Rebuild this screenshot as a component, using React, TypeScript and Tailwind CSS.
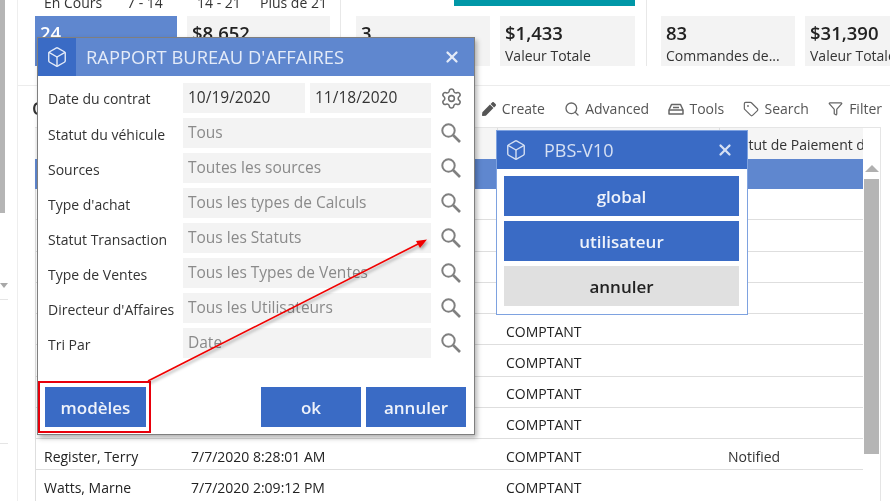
import { Box, Funnel, Search, Settings, Tag, X } from "lucide-react";
import { FaPen } from "react-icons/fa";

const font = { fontFamily: '"Open Sans", "Noto Sans", sans-serif' };

function Tile({ value, label, active, w }: { value: string; label: string; active?: boolean; w: string }) {
  return (
    <div className={`${w} h-[50px] shrink-0 pl-[5px] pt-[6px] ${active ? "bg-[#5f87cf] text-white" : "bg-[#f3f3f3] text-[#222]"}`}>
      <div className="text-[18.5px] leading-[21px] font-semibold">{value}</div>
      <div className="text-[14px] leading-[20px] mt-[3px] truncate text-[#333]">{label}</div>
    </div>
  );
}

function Tool({ icon, label, gap }: { icon: React.ReactNode; label: string; gap: string }) {
  return (
    <div className={`flex items-center ${gap} text-[14px] text-[#555]`}>
      {icon}
      <span>{label}</span>
    </div>
  );
}

function ToolboxIcon() {
  return (
    <svg width="16" height="16" viewBox="0 0 16 16" fill="none" stroke="#666" strokeWidth="1.5">
      <path d="M1 9 L3.5 3.5 H12.5 L15 9 V13 H1 Z" strokeLinejoin="round" />
      <path d="M1 9 H15" />
      <path d="M5 6.5 H11" />
    </svg>
  );
}

function LensIcon() {
  return (
    <svg width="20" height="20" viewBox="0 0 20 20" fill="none" stroke="#808080" strokeWidth="2">
      <circle cx="7.5" cy="7.5" r="6.2" />
      <path d="M12 12 L19 19" strokeWidth="2.6" />
    </svg>
  );
}

const rows: [string, string, string, string][] = [
  ["", "", "COMPTANT", ""],
  ["", "", "COMPTANT", ""],
  ["", "", "COMPTANT", ""],
  ["", "", "COMPTANT", ""],
  ["", "", "COMPTANT", ""],
  ["", "", "COMPTANT", ""],
  ["", "", "COMPTANT", ""],
  ["", "", "COMPTANT", ""],
  ["Register, Terry", "7/7/2020 8:28:01 AM", "COMPTANT", "Notified"],
  ["Watts, Marne", "7/7/2020 2:09:12 PM", "COMPTANT", ""],
];

const fields = [
  ["Statut du véhicule", "Tous"],
  ["Sources", "Toutes les sources"],
  ["Type d'achat", "Tous les types de Calculs"],
  ["Statut Transaction", "Tous les Statuts"],
  ["Type de Ventes", "Tous les Types de Ventes"],
  ["Directeur d'Affaires", "Tous les Utilisateurs"],
  ["Tri Par", "Date"],
];

function SearchBtn() {
  return (
    <div className="w-[40px] flex justify-center">
      <LensIcon />
    </div>
  );
}

export default function App() {
  return (
    <div style={font} className="relative w-[890px] h-[501px] overflow-hidden bg-white text-[#333] flex blur-[0.35px]">
      {/* left sliver */}
      <div className="w-[18px] shrink-0 border-r border-[#eeeeee] flex flex-col">
        <div className="w-[5px] h-[213px] bg-[#b5b5b5]" />
        <div className="mt-[70px] w-0 h-0 border-l-[4px] border-r-[4px] border-t-[5px] border-l-transparent border-r-transparent border-t-[#a8a8a8]" />
        <div className="mt-[11px] w-[8px] border-t border-[#e5e5e5]" />
        <div className="mt-[143px] w-[8px] border-t border-[#e5e5e5]" />
      </div>

      {/* main */}
      <div className="flex-1 min-w-0 flex flex-col">
        <div className="flex h-[66px] pl-[17px] shrink-0">
          <div className="w-[306px] shrink-0 border-r border-[#e8e8e8]">
            <div className="flex -mt-[7px] h-[23px] text-[14px] leading-[20px] text-[#333]">
              <span className="ml-[9px] w-[83px]">En Cours</span>
              <span className="w-[70px]">7 - 14</span>
              <span className="w-[63px]">14 - 21</span>
              <span>Plus de 21</span>
            </div>
            <div className="flex gap-[10px]">
              <Tile value="24" label="" active w="w-[142px]" />
              <Tile value="$8,652" label="" w="w-[143px]" />
            </div>
          </div>
          <div className="w-[306px] shrink-0 pl-[15px] border-r border-[#e8e8e8] relative">
            <div className="h-[16px]">
              <div className="ml-[98px] w-[181px] h-[6px] bg-[#0097a7]" />
            </div>
            <div className="flex gap-[10px]">
              <Tile value="3" label="Commandes de..." w="w-[134px]" />
              <Tile value="$1,433" label="Valeur Totale" w="w-[135px]" />
            </div>
          </div>
          <div className="pl-[14px] pt-[16px] flex gap-[10px]">
            <Tile value="83" label="Commandes de..." w="w-[134px]" />
            <Tile value="$31,390" label="Valeur Totale" w="w-[134px]" />
          </div>
        </div>

        <div className="mt-[19px] border-t border-[#ececec] h-[42px] shrink-0 flex items-center pl-[14px] pr-[8px] pt-[4px]">
          <span className="text-[18px] font-semibold text-[#333]">Commandes</span>
          <div className="ml-auto flex items-center gap-[19.3px]">
            <Tool icon={<FaPen size={14} color="#555" />} label="Create" gap="gap-[6px]" />
            <Tool icon={<Search size={16} strokeWidth={2} color="#666" />} label="Advanced" gap="gap-[5px]" />
            <Tool icon={<ToolboxIcon />} label="Tools" gap="gap-[5px]" />
            <Tool icon={<Tag size={16} strokeWidth={1.75} color="#666" />} label="Search" gap="gap-[5px]" />
            <Tool icon={<Funnel size={15} strokeWidth={2} color="#666" />} label="Filter" gap="gap-[6px]" />
          </div>
        </div>

        {/* grid */}
        <div className="ml-[17px] mr-[9px] flex flex-1 min-h-0 border-r border-t border-[#e5e5e5]">
          <div className="flex-1 min-w-0 text-[14px] text-[#333]">
            <div className="h-[31px] bg-[#f5f5f5] grid grid-cols-[147px_315px_222px_1fr] items-center">
              <div />
              <div />
              <div className="border-l border-[#dddddd] h-full" />
              <div className="border-l border-[#dddddd] h-full pl-[8px] pt-[2px] flex items-center overflow-hidden whitespace-nowrap">
                Statut de Paiement du Client
              </div>
            </div>
            <div className="h-[30px] bg-[#5f87cf]" />
            {rows.map((r, i) => (
              <div
                key={i}
                className="h-[31.25px] border-b border-[#dedede] grid grid-cols-[147px_315px_222px_1fr] items-center border-l pt-[4px]"
              >
                <div className="pl-[8px] whitespace-nowrap text-[#222]">{r[0]}</div>
                <div className="pl-[8px] whitespace-nowrap text-[#222]">{r[1]}</div>
                <div className="pl-[8px] text-[#222]">{r[2]}</div>
                <div className="pl-[8px]">{r[3]}</div>
              </div>
            ))}
          </div>
          <div className="w-[17px] shrink-0 flex flex-col items-center pt-[37px]">
            <div className="w-0 h-0 border-l-[7px] border-r-[7px] border-b-[7px] border-l-transparent border-r-transparent border-b-[#b0b0b0]" />
            <div className="mt-[7px] w-[15px] h-[275px] bg-[#b5b5b5]" />
          </div>
        </div>
      </div>

      {/* Rapport window */}
      <div className="absolute left-[37px] top-[37px] w-[438px] h-[398px] bg-white border border-[#7f7f7f] shadow-[2px_3px_5px_rgba(0,0,0,0.3)] flex flex-col">
        <div className="h-[38px] shrink-0 bg-[#5f87cf] flex items-center text-[#e4ebf8]">
          <div className="w-[38px] h-full bg-[#3a6bc5] flex items-center justify-center">
            <Box size={22} strokeWidth={1.5} />
          </div>
          <div className="ml-[10px] text-[18.35px] whitespace-nowrap">RAPPORT BUREAU D'AFFAIRES</div>
          <X size={18} strokeWidth={3} className="ml-auto mr-[13px]" />
        </div>
        <div className="pl-[10px] pt-[7px] flex flex-col gap-[5px]">
          <div className="flex items-center h-[30px]">
            <div className="w-[135px] text-[14px] whitespace-nowrap pt-[1px]">Date du contrat</div>
            <div className="w-[122px] h-full bg-[#f3f3f3] pl-[5px] flex items-center text-[15.5px] text-[#333]">10/19/2020</div>
            <div className="w-[121px] ml-[5px] h-full bg-[#f3f3f3] pl-[5px] flex items-center text-[15.5px] text-[#333]">11/18/2020</div>
            <div className="w-[40px] flex justify-center">
              <Settings size={23} strokeWidth={1.6} className="text-[#707070]" />
            </div>
          </div>
          {fields.map(([label, value]) => (
            <div key={label} className="flex items-center h-[30px]">
              <div className="w-[135px] text-[14px] whitespace-nowrap pt-[2px]">{label}</div>
              <div className="w-[248px] h-full bg-[#f3f3f3] pl-[5px] pb-[1px] flex items-center text-[15.5px] text-[#8a8a8a]">{value}</div>
              <SearchBtn />
            </div>
          ))}
        </div>
        <div className="mt-auto mb-[7px] flex items-center pl-[7px] pr-[8px]">
          <button className="w-[101px] h-[40px] pt-[2px] bg-[#3a6bc5] text-[#eef2fa] text-[17px] font-semibold">modèles</button>
          <button className="ml-auto w-[100px] h-[40px] pt-[2px] bg-[#3a6bc5] text-[#eef2fa] text-[17px] font-semibold">ok</button>
          <button className="ml-[5px] w-[100px] h-[40px] pt-[2px] bg-[#3a6bc5] text-[#eef2fa] text-[17px] font-semibold">annuler</button>
        </div>
      </div>

      {/* annotation */}
      <div className="absolute left-[38px] top-[381px] w-[113px] h-[52px] border-[2px] border-[#e8000b]" />
      <svg className="absolute left-0 top-0 pointer-events-none" width="890" height="501" viewBox="0 0 890 501">
        <defs>
          <filter id="sh" x="-10%" y="-10%" width="120%" height="120%">
            <feDropShadow dx="1.5" dy="2" stdDeviation="1.5" floodColor="#000" floodOpacity="0.35" />
          </filter>
        </defs>
        <g filter="url(#sh)">
          <path d="M148 381 L420 243" stroke="#f00000" strokeWidth="1.6" fill="none" />
          <path d="M427 239.5 L416 241 L420 248 Z" fill="#f00000" />
        </g>
      </svg>

      {/* PBS window */}
      <div className="absolute left-[496px] top-[130px] w-[252px] h-[185px] bg-white border border-[#7ea2e0] flex flex-col">
        <div className="h-[38px] shrink-0 bg-[#3a6bc5] flex items-center text-[#d6e0f3]">
          <Box size={22} strokeWidth={1.5} className="ml-[8px]" />
          <div className="ml-[17px] text-[18px]">PBS-V10</div>
          <X size={18} strokeWidth={3} className="ml-auto mr-[13px]" />
        </div>
        <div className="pl-[7px] pr-[8px] pt-[7px] flex flex-col gap-[5px]">
          <button className="h-[40px] pt-[2px] bg-[#3a6bc5] text-[#eef2fa] text-[17px] font-semibold">global</button>
          <button className="h-[40px] pt-[2px] bg-[#3a6bc5] text-[#eef2fa] text-[17px] font-semibold">utilisateur</button>
          <button className="h-[40px] pt-[2px] bg-[#e0e0e0] text-[#222] text-[17px] font-semibold">annuler</button>
        </div>
      </div>
    </div>
  );
}
